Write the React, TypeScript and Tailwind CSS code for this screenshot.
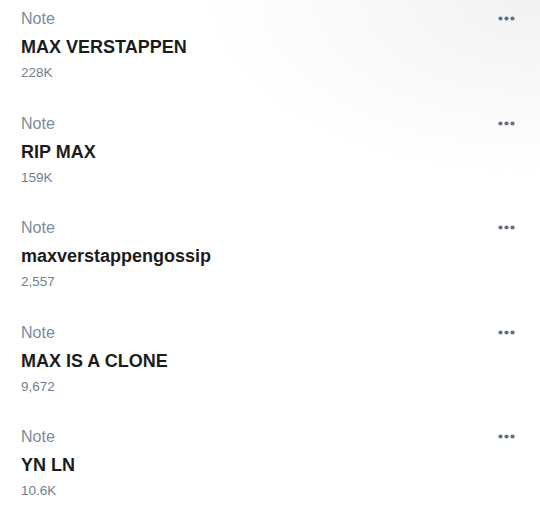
const notes = [
  { title: 'MAX VERSTAPPEN', count: '228K' },
  { title: 'RIP MAX', count: '159K' },
  { title: 'maxverstappengossip', count: '2,557' },
  { title: 'MAX IS A CLONE', count: '9,672' },
  { title: 'YN LN', count: '10.6K' },
]

function Dots() {
  return (
    <svg width="17" height="5" viewBox="0 0 17 5" className="text-[#617182]">
      <circle cx="2.5" cy="2.5" r="2.1" fill="currentColor" />
      <circle cx="8.5" cy="2.5" r="2.1" fill="currentColor" />
      <circle cx="14.5" cy="2.5" r="2.1" fill="currentColor" />
    </svg>
  )
}

export default function App() {
  return (
    <div className="w-[540px] h-[517px] overflow-hidden bg-white bg-[radial-gradient(ellipse_340px_180px_at_100%_0%,#f2f2f2_0%,#fafafa_60%,#ffffff_100%)] font-['Liberation_Sans',Arial,sans-serif]">
      {notes.map((n) => (
        <div key={n.title} className="h-[104.5px] flex pl-[21px] pr-[25px] pt-[10px]">
          <div className="flex-1 flex flex-col">
            <div className="text-[16px] leading-[18px] text-[#7b8b9b]">Note</div>
            <div className="mt-[9px] text-[18px] leading-[21px] font-bold text-[#1c1c1c]">{n.title}</div>
            <div className="mt-[7px] text-[13.5px] leading-[16px] text-[#6f8090]">{n.count}</div>
          </div>
          <div className="pt-[6px]">
            <Dots />
          </div>
        </div>
      ))}
    </div>
  )
}
